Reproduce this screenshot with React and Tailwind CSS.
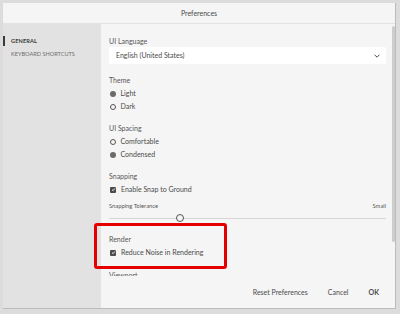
const font = { fontFamily: 'Lato, "Open Sans", sans-serif' };

const Radio = ({ checked, label }) => (
  <div className="flex h-[13px] items-center gap-[5px]">
    {checked ? (
      <span className="ml-[0.5px] h-[6px] w-[6px] rounded-full bg-[#6b6b6b]" />
    ) : (
      <span className="ml-[0.5px] h-[6px] w-[6px] rounded-full border border-[#555]" />
    )}
    <span className="text-[7px] text-[#4b4b4b]">{label}</span>
  </div>
);

const Check = ({ label }) => (
  <div className="flex h-[13px] items-center gap-[5px]">
    <span className="ml-[1px] flex h-[6px] w-[6px] items-center justify-center rounded-[1px] bg-[#4b4b4b]">
      <svg width="5" height="5" viewBox="0 0 10 10">
        <path d="M2 5.2 L4.2 7.3 L8 2.8" fill="none" stroke="#fff" strokeWidth="1.8" />
      </svg>
    </span>
    <span className="text-[7px] text-[#4b4b4b]">{label}</span>
  </div>
);

const Label = ({ children }) => (
  <div className="flex h-[13px] items-center text-[7px] text-[#555]">{children}</div>
);

export default function App() {
  return (
    <div className="h-[314px] w-[400px] bg-[#dcdcdc] pl-[3px] pt-[3px]" style={font}>
      <div className="flex h-[306px] w-[393px] flex-col border-b border-r border-[#bcbcbc] bg-[#f5f5f5]">
        {/* title */}
        <div className="flex h-[21px] shrink-0 items-center justify-center border-b border-[#e2e2e2] text-[7px] text-[#4b4b4b]">
          Preferences
        </div>

        <div className="flex min-h-0 flex-1">
          {/* sidebar */}
          <div className="w-[98px] shrink-0 bg-[#e2e2e2] pt-[12px]">
            <div className="flex h-[10px] items-center">
              <span className="h-[10px] w-[1.5px] bg-[#3a3a3a]" />
              <span className="ml-[6.5px] text-[5.6px] font-bold tracking-[0.1px] text-[#3a3a3a]">GENERAL</span>
            </div>
            <div className="mt-[3px] flex h-[10px] items-center pl-[8px] text-[5.6px] text-[#6e6e6e]">
              KEYBOARD SHORTCUTS
            </div>
          </div>

          {/* main */}
          <div className="flex min-w-0 flex-1 flex-col">
            <div className="flex h-[252px] shrink-0 [clip-path:inset(0_0_0_-30px)]">
              <div className="w-[285px] shrink-0 pl-[8px] pt-[11px]">
                <div className="flex h-[12px] items-center text-[7px] text-[#555]">UI Language</div>
                <div className="flex h-[17px] items-center justify-between rounded-[2px] bg-white pl-[7px] pr-[6px] text-[7px] text-[#4b4b4b]">
                  <span>English (United States)</span>
                  <svg width="6" height="4" viewBox="0 0 6 4">
                    <path d="M0.6 0.8 L3 3.2 L5.4 0.8" fill="none" stroke="#4b4b4b" strokeWidth="1" />
                  </svg>
                </div>

                <div className="mt-[10px]">
                  <Label>Theme</Label>
                  <Radio checked label="Light" />
                  <Radio label="Dark" />
                </div>

                <div className="mt-[9px]">
                  <Label>UI Spacing</Label>
                  <Radio label="Comfortable" />
                  <Radio checked label="Condensed" />
                </div>

                <div className="mt-[9px]">
                  <Label>Snapping</Label>
                  <Check label="Enable Snap to Ground" />
                </div>

                <div className="mt-[5px] flex h-[11px] items-center justify-between text-[5.8px] text-[#555]">
                  <span>Snapping Tolerance</span>
                  <span>Small</span>
                </div>
                <div className="relative flex h-[12px] items-center">
                  <div className="h-px w-full bg-[#d6d6d6]" />
                  <span className="absolute left-[67px] top-[2px] h-[8px] w-[8px] rounded-full border border-[#555] bg-[#f5f5f5]" />
                </div>

                <div className="relative mt-[9px]">
                  <Label>Render</Label>
                  <Check label="Reduce Noise in Rendering" />
                  <div className="absolute left-[-15px] top-[-10px] h-[46px] w-[133px] rounded-[3px] border-[3.5px] border-[#e50000]" />
                </div>

                <div className="mt-[10px]">
                  <Label>Viewport</Label>
                </div>
              </div>
              <div className="w-[9px] shrink-0 pl-[6px] pt-[2px]">
                <div className="h-[216px] w-[2.5px] rounded-full bg-[#cdcdcd]" />
              </div>
            </div>

            {/* footer */}
            <div className="flex flex-1 items-center justify-end gap-[20px] pr-[16px] text-[7px] text-[#4b4b4b]">
              <span>Reset Preferences</span>
              <span>Cancel</span>
              <span className="font-bold">OK</span>
            </div>
          </div>
        </div>
      </div>
    </div>
  );
}
